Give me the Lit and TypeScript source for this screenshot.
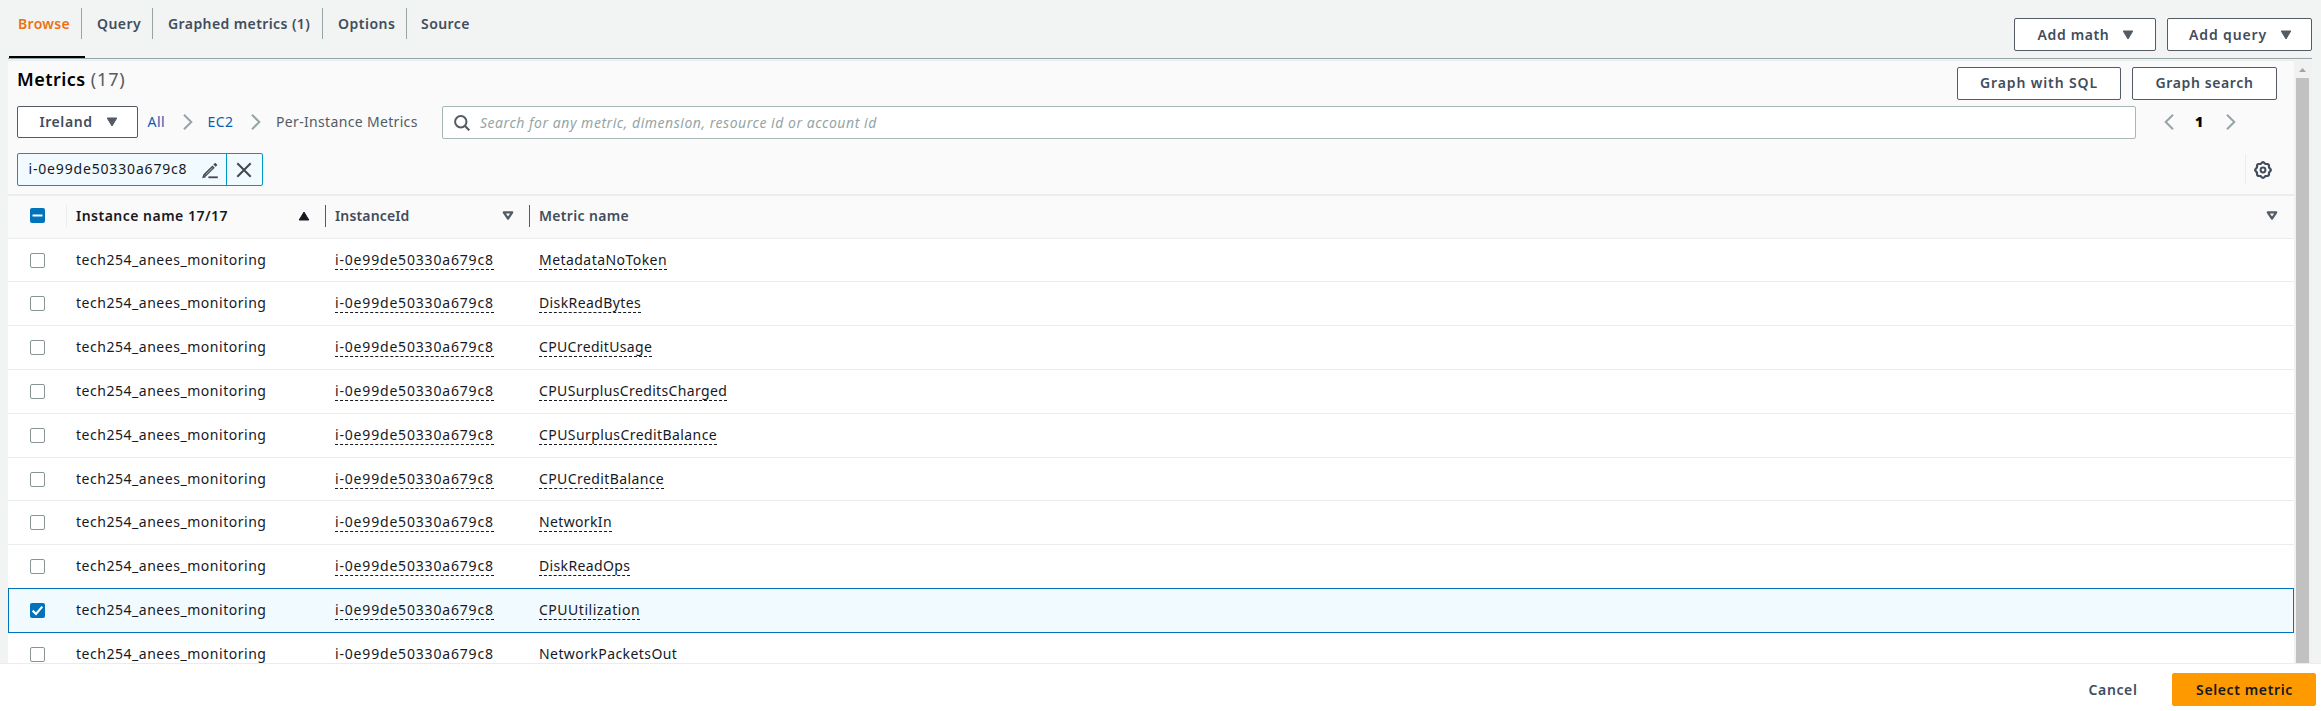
import { LitElement, html, svg, css } from 'lit';
import { customElement, property } from 'lit/decorators.js';
import { classMap } from 'lit/directives/class-map.js';
import { styleMap } from 'lit/directives/style-map.js';

interface Label { text: string; track: number }

const TABS: Label[] = [
  { text: 'Browse', track: 0.32 },
  { text: 'Query', track: 0.42 },
  { text: 'Graphed metrics (1)', track: 0.41 },
  { text: 'Options', track: 0.5 },
  { text: 'Source', track: 0.45 },
];

const METRICS: Label[] = [
  { text: 'MetadataNoToken', track: 0.45 },
  { text: 'DiskReadBytes', track: 0.39 },
  { text: 'CPUCreditUsage', track: 0.35 },
  { text: 'CPUSurplusCreditsCharged', track: 0.36 },
  { text: 'CPUSurplusCreditBalance', track: 0.42 },
  { text: 'CPUCreditBalance', track: 0.4 },
  { text: 'NetworkIn', track: 0.36 },
  { text: 'DiskReadOps', track: 0.35 },
  { text: 'CPUUtilization', track: 0.51 },
  { text: 'NetworkPacketsOut', track: 0.42 },
];

const SELECTED = 'CPUUtilization';
const INSTANCE_NAME = 'tech254_anees_monitoring';
const INSTANCE_ID = 'i-0e99de50330a679c8';

const gearPath = () => {
  const points: string[] = [];
  for (let i = 0; i <= 96; i++) {
    const a = (i / 96) * Math.PI * 2;
    const r = 7.2 + 0.6 * Math.cos(a * 8);
    points.push(`${(9 + r * Math.sin(a)).toFixed(2)} ${(9 - r * Math.cos(a)).toFixed(2)}`);
  }
  return 'M' + points.join('L') + 'Z';
};

const ICONS = {
  caret: { w: 12, h: 10, body: svg`<path d="M1.2 1h9.6L6 9z" fill="#545b64" stroke="#545b64" stroke-linejoin="round"/>` },
  sortUp: { w: 12, h: 10, body: svg`<path d="M1.2 9h9.6L6 1z" fill="#16191f" stroke="#16191f" stroke-linejoin="round"/>` },
  sortDown: { w: 12, h: 10, body: svg`<path d="M1.8 1.4h8.4L6 7.6z" fill="none" stroke="#545b64" stroke-width="2.3" stroke-linejoin="round"/>` },
  right: { w: 10, h: 16, body: svg`<path d="M1 .8 8.3 8 1 15.2" fill="none" stroke="#95a5a6" stroke-width="2"/>` },
  left: { w: 10, h: 16, body: svg`<path d="M9 .8 1.7 8 9 15.2" fill="none" stroke="#95a5a6" stroke-width="2"/>` },
  search: { w: 16, h: 16, body: svg`<circle cx="6.8" cy="6.8" r="5.7" fill="none" stroke="#545b64" stroke-width="2"/><path d="M10.8 10.8 15.3 15.3" stroke="#545b64" stroke-width="2.2"/>` },
  pencil: { w: 16, h: 16, body: svg`<path d="M2.4 12.6 11.6 3.6" stroke="#414750" stroke-width="3.2"/><path d="M3.6 11.7 10.6 4.8" stroke="#f1faff" stroke-width=".7"/><path d="M12.5 2.7 14.3 .9" stroke="#414750" stroke-width="3.2"/><path d="M.2 15.2 1.2 11.5 4 14.2z" fill="#414750"/><path d="M6.4 14.3h9.4" stroke="#414750" stroke-width="1.8"/>` },
  close: { w: 16, h: 16, body: svg`<path d="M1.3 1.3 14.7 14.7M14.7 1.3 1.3 14.7" stroke="#414750" stroke-width="2"/>` },
  gear: { w: 18, h: 18, body: svg`<path d=${gearPath()} fill="none" stroke="#414d5c" stroke-width="2.2"/><circle cx="9" cy="9" r="2.4" fill="none" stroke="#414d5c" stroke-width="2"/>` },
  tick: { w: 15, h: 15, body: svg`<path d="M2.6 7.6 6 11 12.3 3.6" fill="none" stroke="#fff" stroke-width="2.2"/>` },
  dash: { w: 15, h: 15, body: svg`<path d="M2.5 7.5h10" stroke="#fff" stroke-width="2"/>` },
  scrollUp: { w: 7, h: 4, body: svg`<path d="M0 4h7L3.5 0z" fill="#a3a3a3"/>` },
};

@customElement('cw-icon')
export class CwIcon extends LitElement {
  @property() name: keyof typeof ICONS = 'caret';
  static styles = css`:host { display: inline-flex; flex: none; } svg { display: block; }`;
  render() {
    const i = ICONS[this.name];
    return html`<svg width=${i.w} height=${i.h} viewBox="0 0 ${i.w} ${i.h}">${i.body}</svg>`;
  }
}

@customElement('cw-check')
export class CwCheck extends LitElement {
  @property() state: 'off' | 'on' | 'mixed' = 'off';
  static styles = css`
    :host { display: block; width: 15px; height: 15px; }
    .box { box-sizing: border-box; width: 15px; height: 15px; border: 1px solid #879596; border-radius: 2px; background: #fff; }
    .box.filled { border: 0; background: #0073bb; }
    cw-icon { display: block; }
  `;
  render() {
    const filled = this.state !== 'off';
    return html`<div class=${classMap({ box: true, filled })}>
      ${filled ? html`<cw-icon name=${this.state === 'on' ? 'tick' : 'dash'}></cw-icon>` : null}
    </div>`;
  }
}

@customElement('app-root')
export class AppRoot extends LitElement {
  static styles = css`
    :host { display: flex; flex-direction: column; height: 711px; overflow: hidden; background: #f2f3f3;
      font: 14px/20px "Noto Sans", "Open Sans", sans-serif; color: #16191f; white-space: nowrap; }
    * { box-sizing: border-box; }
    .topbar { flex: none; display: flex; justify-content: space-between; height: 59px; margin: 0 9px 0 8px; border-bottom: 1px solid #95a5a6; }
    .tabs { display: flex; }
    .tab { height: 58px; padding-top: 8px; border-bottom: 2px solid transparent; font-weight: 600; color: #414d5c; }
    .tab .label { display: flex; align-items: center; height: 31px; padding: 0 11px 0 15px; border-right: 1px solid #95a5a6; }
    .tab:first-child { margin-right: -3px; margin-left: 1px; color: #ec7211; border-bottom-color: #000; }
    .tab:first-child .label { padding-left: 9px; margin-right: 3px; }
    .tab:last-child .label { border: 0; padding-left: 14px; }
    .t0 { width: 76px; } .t1 { width: 71px; } .t2 { width: 170px; } .t3 { width: 84px; }
    .buttons { display: flex; gap: 11px; }
    .topbar .buttons { padding-top: 18px; }
    .btn { display: flex; align-items: center; justify-content: center; height: 33px; border: 1px solid #545b64; border-radius: 2px; background: #fff; color: #414d5c; font-weight: 600; letter-spacing: .62px; padding-bottom: 1px; }
    .btn cw-icon { margin-left: 13px; }
    .topbar .btn { padding-bottom: 0; padding-left: 2px; }
    .footer .btn { padding-bottom: 0; padding-left: 1px; }
    .math { width: 142px; } .query { width: 145px; letter-spacing: .87px; }
    .sql { width: 164px; letter-spacing: .88px; } .search-btn { width: 145px; }
    .body { flex: none; display: flex; height: 604px; overflow: hidden; margin: 0 9px 0 8px; padding-top: 1px; }
    .panel { width: 2286px; background: #fff; overflow: hidden; border-top: 1px solid #eaeded; }
    .head { height: 133px; background: #fafafa; padding: 6px 17px 0 9px; }
    .title-row { display: flex; justify-content: space-between; height: 39px; }
    h2 { margin: 0; font-size: 18px; line-height: 24px; font-weight: 600; color: #000; letter-spacing: .45px; }
    .count { font-weight: 400; color: #545b64; letter-spacing: .9px; }
    .filter-row { display: flex; height: 47px; align-items: flex-start; }
    .region { width: 121px; height: 32px; letter-spacing: .57px; padding-left: 2px; }
    .crumbs { display: flex; align-items: center; height: 32px; padding-left: 9.5px; width: 304px; color: #545b64; }
    .crumbs cw-icon { margin: 0 15px 0 17.5px; }
    .link { color: #0f5cb0; letter-spacing: .45px; }
    .current { letter-spacing: .33px; }
    .field { display: flex; align-items: center; width: 1694px; height: 33px; border: 1px solid #aab7b8; border-radius: 2px; background: #fff; padding-left: 11px; color: #95a5a6; font-style: italic; letter-spacing: .53px; }
    .field span { margin-left: 10px; }
    .pager { display: flex; align-items: center; height: 32px; margin-left: 28px; font-weight: 700; color: #000; }
    .pager b { width: 52px; text-align: center; padding-right: 2px; }
    .token-row { display: flex; justify-content: space-between; }
    .token { display: flex; width: 246px; height: 33px; border: 1px solid #0099c3; border-radius: 2px; background: #f1faff; letter-spacing: .83px; }
    .token-text { display: flex; align-items: center; width: 209px; padding-left: 10.5px; padding-bottom: 1px; border-right: 1px solid #0099c3; }
    .token-text cw-icon { margin: 3px 0 0 14.5px; }
    .dismiss { display: flex; align-items: center; padding-left: 9px; }
    .prefs { display: flex; align-items: center; width: 32px; height: 31px; margin-top: 1px; padding-left: 7.5px; border-left: 1px solid #eaeded; }
    .grid { display: grid; grid-template-columns: 58px 259px 204px 1fr; }
    .thead { height: 43.7px; border-top: 2px solid #eaeded; background: #fafafa; font-weight: 600; color: #414d5c; align-items: center; padding-bottom: 2px; }
    .th { display: flex; align-items: center; justify-content: space-between; height: 22px; border-left: 1px solid #545b64; padding: 0 15px 0 9px; }
    .th.name { border-left-color: #eaeded; color: #16191f; letter-spacing: .49px; }
    .th.id { letter-spacing: .15px; }
    .th.metric { letter-spacing: .33px; padding-right: 16px; }
    .check { padding-left: 22px; }
    .row { height: 43.8px; border-top: 1px solid #eaeded; }
    .row .check { padding-top: 14px; }
    .row.selected { position: relative; height: 44.8px; margin: 0 0 -1px; border: 1px solid #0073bb; background: #f1faff; }
    .row.selected .check { padding-left: 21px; }
    .row.selected .cell { margin-left: -1px; }
    .cell { padding: 11px 0 0 10px; }
    .cell.iname { letter-spacing: .53px; }
    .term { display: inline-block; height: 20px; line-height: 20px; border-bottom: 1px dashed #16191f; }
    .term.iid { letter-spacing: .82px; }
    .rail { width: 18px; background: #f1f1f1; padding: 8px 3px 0 2px; display: flex; flex-direction: column; align-items: center; }
    .thumb { width: 13px; margin-top: 6px; flex: 1; background: #c1c1c1; }
    .footer { flex: 1; display: flex; justify-content: flex-end; align-items: flex-start; background: #fff; border-top: 1px solid #eaeded; padding: 9px 5px 0 0; }
    .plain { border-color: transparent; background: none; width: 119px; }
    .primary { width: 144px; border-color: #ff9900; background: #ff9900; color: #16191f; }
  `;

  private tracked = (l: Label, cls: string) =>
    html`<span class=${cls} style=${styleMap({ letterSpacing: `${l.track}px` })}>${l.text}</span>`;

  private row(m: Label) {
    const selected = m.text === SELECTED;
    return html`<div class=${classMap({ grid: true, row: true, selected })}>
      <div class="check"><cw-check state=${selected ? 'on' : 'off'}></cw-check></div>
      <div class="cell iname">${INSTANCE_NAME}</div>
      <div class="cell"><span class="term iid">${INSTANCE_ID}</span></div>
      <div class="cell">${this.tracked(m, 'term')}</div>
    </div>`;
  }

  render() {
    return html`
      <div class="topbar">
        <div class="tabs">
          ${TABS.map((t, i) => html`<div class="tab t${i}">${this.tracked(t, 'label')}</div>`)}
        </div>
        <div class="buttons">
          <div class="btn math">Add math<cw-icon name="caret"></cw-icon></div>
          <div class="btn query">Add query<cw-icon name="caret"></cw-icon></div>
        </div>
      </div>
      <div class="body">
        <div class="panel">
          <div class="head">
            <div class="title-row">
              <h2>Metrics <span class="count">(17)</span></h2>
              <div class="buttons">
                <div class="btn sql">Graph with SQL</div>
                <div class="btn search-btn">Graph search</div>
              </div>
            </div>
            <div class="filter-row">
              <div class="btn region">Ireland<cw-icon name="caret"></cw-icon></div>
              <div class="crumbs">
                <span class="link">All</span><cw-icon name="right"></cw-icon>
                <span class="link">EC2</span><cw-icon name="right"></cw-icon>
                <span class="current">Per-Instance Metrics</span>
              </div>
              <div class="field"><cw-icon name="search"></cw-icon><span>Search for any metric, dimension, resource id or account id</span></div>
              <div class="pager"><cw-icon name="left"></cw-icon><b>1</b><cw-icon name="right"></cw-icon></div>
            </div>
            <div class="token-row">
              <div class="token">
                <div class="token-text">${INSTANCE_ID}<cw-icon name="pencil"></cw-icon></div>
                <div class="dismiss"><cw-icon name="close"></cw-icon></div>
              </div>
              <div class="prefs"><cw-icon name="gear"></cw-icon></div>
            </div>
          </div>
          <div class="grid thead">
            <div class="check"><cw-check state="mixed"></cw-check></div>
            <div class="th name">Instance name 17/17<cw-icon name="sortUp"></cw-icon></div>
            <div class="th id">InstanceId<cw-icon name="sortDown"></cw-icon></div>
            <div class="th metric">Metric name<cw-icon name="sortDown"></cw-icon></div>
          </div>
          ${METRICS.map((m) => this.row(m))}
        </div>
        <div class="rail"><cw-icon name="scrollUp"></cw-icon><div class="thumb"></div></div>
      </div>
      <div class="footer">
        <div class="btn plain">Cancel</div>
        <div class="btn primary">Select metric</div>
      </div>
    `;
  }
}
